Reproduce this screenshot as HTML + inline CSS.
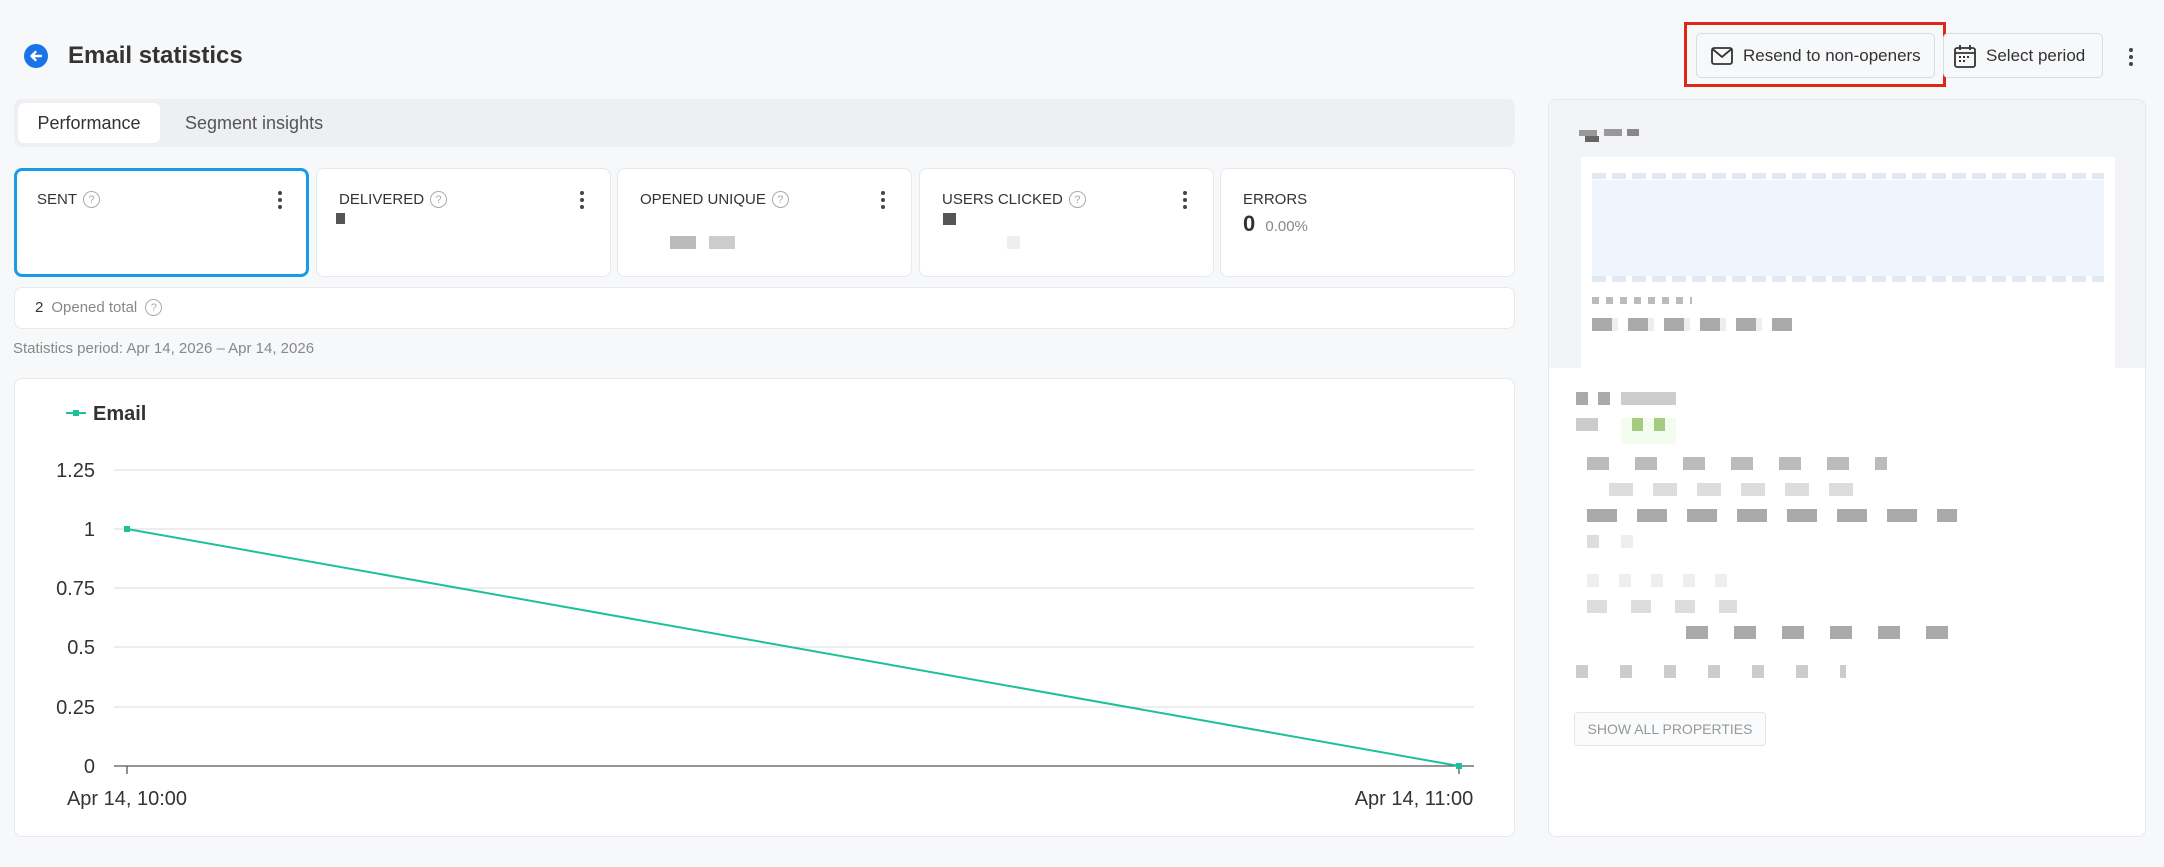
<!DOCTYPE html>
<html><head><meta charset="utf-8"><style>
*{box-sizing:border-box;margin:0;padding:0}
body{width:2164px;height:867px;background:#f7f8fa;font-family:"Liberation Sans",Arial,sans-serif;color:#333;position:relative;overflow:hidden}
.a{position:absolute}
.card{position:absolute;background:#fff;border:1px solid #e6e8ec;border-radius:8px}
.lbl{font-size:15px;color:#333;position:absolute;left:22px;top:22px;display:flex;align-items:center;gap:6px}
.q{width:17px;height:17px;border:1.5px solid #aaa;border-radius:50%;font-size:11px;color:#aaa;display:inline-flex;align-items:center;justify-content:center}
.kb{position:absolute;right:26px;top:22px;width:4px}
.kb i{display:block;width:4px;height:4px;border-radius:2px;background:#444;margin-bottom:3px}
.btn{position:absolute;border:1px solid #d8dbe0;border-radius:5px;background:#f7f8fa;font-size:17px;color:#333;display:flex;align-items:center;gap:10px;padding-left:14px;white-space:nowrap}
.px{position:absolute;height:13px}
</style></head><body>
<div class="a" style="left:24px;top:44px;width:24px;height:24px;border-radius:50%;background:#1a73e8"><svg width="24" height="24" viewBox="0 0 24 24"><path d="M17 12H8M11.5 8L7.5 12l4 4" stroke="#fff" stroke-width="2.4" fill="none" stroke-linecap="round" stroke-linejoin="round"/></svg></div>
<div class="a" style="left:68px;top:42px;font-size:24px;font-weight:bold;color:#333">Email statistics</div>

<div class="a" style="left:1684px;top:22px;width:262px;height:65px;border:3px solid #e0261b"></div>
<div class="btn" style="left:1696px;top:33px;width:239px;height:45px"><svg width="22" height="18" viewBox="0 0 22 18"><rect x="1" y="1" width="20" height="16" rx="2" fill="none" stroke="#333" stroke-width="1.8"/><path d="M1.5 2l9.5 8 9.5-8" fill="none" stroke="#333" stroke-width="1.8"/></svg>Resend to non-openers</div>
<div class="btn" style="left:1943px;top:33px;width:160px;height:45px;padding-left:10px"><svg width="22" height="24" viewBox="0 0 22 24"><rect x="1" y="4" width="20" height="19" rx="2" fill="none" stroke="#333" stroke-width="1.8"/><path d="M1 9h20M6 1v5M16 1v5" stroke="#333" stroke-width="1.8"/><path d="M5 13h2M9 13h2M13 13h2M5 17h2M9 17h2" stroke="#333" stroke-width="2"/></svg>Select period</div>
<div class="a" style="left:2129px;top:48px"><i style="display:block;width:4px;height:4px;border-radius:2px;background:#444;margin-bottom:3px"></i><i style="display:block;width:4px;height:4px;border-radius:2px;background:#444;margin-bottom:3px"></i><i style="display:block;width:4px;height:4px;border-radius:2px;background:#444"></i></div>

<div class="a" style="left:14px;top:99px;width:1501px;height:48px;background:#edeff3;border-radius:8px"></div>
<div class="a" style="left:18px;top:103px;width:142px;height:40px;background:#fff;border-radius:6px;font-size:18px;color:#333;text-align:center;line-height:40px">Performance</div>
<div class="a" style="left:185px;top:103px;font-size:18px;color:#555;line-height:40px">Segment insights</div>

<div class="card" style="left:14px;top:168px;width:295px;height:109px;border:3px solid #1a9be8"><div class="lbl" style="left:20px;top:20px">SENT <span class="q">?</span></div><div class="kb" style="right:24px;top:20px"><i></i><i></i><i></i></div></div>
<div class="card" style="left:316px;top:168px;width:295px;height:109px"><div class="lbl">DELIVERED <span class="q">?</span></div><div class="kb"><i></i><i></i><i></i></div><div class="px" style="left:19px;top:44px;width:9px;height:11px;background:#555"></div></div>
<div class="card" style="left:617px;top:168px;width:295px;height:109px"><div class="lbl">OPENED UNIQUE <span class="q">?</span></div><div class="kb"><i></i><i></i><i></i></div><div class="px" style="left:52px;top:67px;width:26px;background:#bbb"></div><div class="px" style="left:91px;top:67px;width:26px;background:#ccc"></div></div>
<div class="card" style="left:919px;top:168px;width:295px;height:109px"><div class="lbl">USERS CLICKED <span class="q">?</span></div><div class="kb"><i></i><i></i><i></i></div><div class="px" style="left:23px;top:44px;width:13px;height:12px;background:#555"></div><div class="px" style="left:87px;top:67px;width:13px;background:#eee"></div></div>
<div class="card" style="left:1220px;top:168px;width:295px;height:109px"><div class="lbl">ERRORS</div><div class="a" style="left:22px;top:42px;font-size:22px;font-weight:bold">0 <span style="font-size:15px;font-weight:normal;color:#888;margin-left:4px">0.00%</span></div></div>

<div class="card" style="left:14px;top:287px;width:1501px;height:42px"><div class="a" style="left:20px;top:11px;font-size:15px;display:flex;align-items:center;gap:8px">2 <span style="color:#888">Opened total</span> <span class="q">?</span></div></div>
<div class="a" style="left:13px;top:340px;font-size:15px;color:#888">Statistics period: Apr 14, 2026 – Apr 14, 2026</div>

<div class="card" style="left:14px;top:378px;width:1501px;height:459px">
<svg class="a" style="left:-1px;top:-1px" width="1501" height="459" font-family="Liberation Sans, Arial, sans-serif">
<path d="M52 35h20" stroke="#1cc099" stroke-width="2"/><rect x="59" y="32" width="6" height="6" fill="#1cc099"/>
<text x="79" y="42" font-size="20" font-weight="bold" fill="#333">Email</text>
<g stroke="#e2e2e2" stroke-width="1.3"><path d="M100 92H1460M100 151H1460M100 210H1460M100 269H1460M100 329H1460"/></g>
<path d="M100 388H1460" stroke="#555" stroke-width="1.3"/>
<path d="M113 388v8M1445 388v8" stroke="#555" stroke-width="1.3"/>
<g font-size="20" fill="#333" text-anchor="end"><text x="81" y="99">1.25</text><text x="81" y="158">1</text><text x="81" y="217">0.75</text><text x="81" y="276">0.5</text><text x="81" y="336">0.25</text><text x="81" y="395">0</text></g>
<g font-size="20" fill="#333" text-anchor="middle"><text x="113" y="427">Apr 14, 10:00</text><text x="1400" y="427">Apr 14, 11:00</text></g>
<path d="M113 151L1445 388" stroke="#1cc099" stroke-width="2"/>
<rect x="110" y="148" width="6" height="6" fill="#1cc099"/><rect x="1442" y="385" width="6" height="6" fill="#1cc099"/>
</svg></div>

<div class="card" style="left:1548px;top:99px;width:598px;height:738px;background:#fff;overflow:hidden">
<div class="a" style="left:0;top:0;width:598px;height:268px;background:#f3f4f7"></div>
<div class="px" style="left:30px;top:30px;width:18px;height:6px;background:#999"></div><div class="px" style="left:36px;top:36px;width:14px;height:6px;background:#666"></div><div class="px" style="left:55px;top:29px;width:18px;height:7px;background:#999"></div><div class="px" style="left:78px;top:29px;width:12px;height:7px;background:#888"></div>
<div class="a" style="left:32px;top:57px;width:534px;height:211px;background:#fff"></div>
<div class="a" style="left:43px;top:80px;width:512px;height:96px;background:#eff5fd"></div>
<div class="a" style="left:43px;top:73px;width:512px;height:6px;background:repeating-linear-gradient(90deg,#e3e9f3 0 14px,#fff 14px 20px)"></div>
<div class="a" style="left:43px;top:176px;width:512px;height:6px;background:repeating-linear-gradient(90deg,#e3e9f3 0 14px,#fff 14px 20px)"></div>
<div class="px" style="left:43px;top:197px;width:100px;height:7px;background:repeating-linear-gradient(90deg,#bbb 0 7px,#fff 7px 14px)"></div>
<div class="px" style="left:43px;top:218px;width:200px;height:13px;background:repeating-linear-gradient(90deg,#aaa 0 20px,#eee 20px 26px,#fff 26px 36px)"></div>
<div class="px" style="left:27px;top:292px;width:12px;background:#aaa"></div><div class="px" style="left:49px;top:292px;width:12px;background:#aaa"></div><div class="px" style="left:72px;top:292px;width:55px;background:#ccc"></div>
<div class="px" style="left:27px;top:318px;width:22px;background:#ccc"></div><div class="a" style="left:72px;top:318px;width:55px;height:26px;background:#f2fcef"></div><div class="px" style="left:83px;top:318px;width:11px;background:#a5cb80"></div><div class="px" style="left:105px;top:318px;width:11px;background:#a5cb80"></div>
<div class="px" style="left:38px;top:357px;width:300px;background:repeating-linear-gradient(90deg,#bbb 0 22px,#fff 22px 48px)"></div>
<div class="px" style="left:60px;top:383px;width:260px;background:repeating-linear-gradient(90deg,#ddd 0 24px,#fff 24px 44px)"></div>
<div class="px" style="left:38px;top:409px;width:370px;background:repeating-linear-gradient(90deg,#aaa 0 30px,#fff 30px 50px)"></div>
<div class="px" style="left:38px;top:435px;width:12px;background:#ddd"></div><div class="px" style="left:72px;top:435px;width:12px;background:#eee"></div>
<div class="px" style="left:38px;top:474px;width:140px;background:repeating-linear-gradient(90deg,#eee 0 12px,#fff 12px 32px)"></div>
<div class="px" style="left:38px;top:500px;width:150px;background:repeating-linear-gradient(90deg,#ddd 0 20px,#fff 20px 44px)"></div>
<div class="px" style="left:137px;top:526px;width:270px;background:repeating-linear-gradient(90deg,#aaa 0 22px,#fff 22px 48px)"></div>
<div class="px" style="left:27px;top:565px;width:270px;background:repeating-linear-gradient(90deg,#ccc 0 12px,#fff 12px 44px)"></div>
<div class="a" style="left:25px;top:612px;width:192px;height:34px;border:1px solid #e4e6ea;border-radius:4px;background:#fafbfc;font-size:14px;color:#999;line-height:32px;text-align:center;white-space:nowrap">SHOW ALL PROPERTIES</div>
</div>
</body></html>
